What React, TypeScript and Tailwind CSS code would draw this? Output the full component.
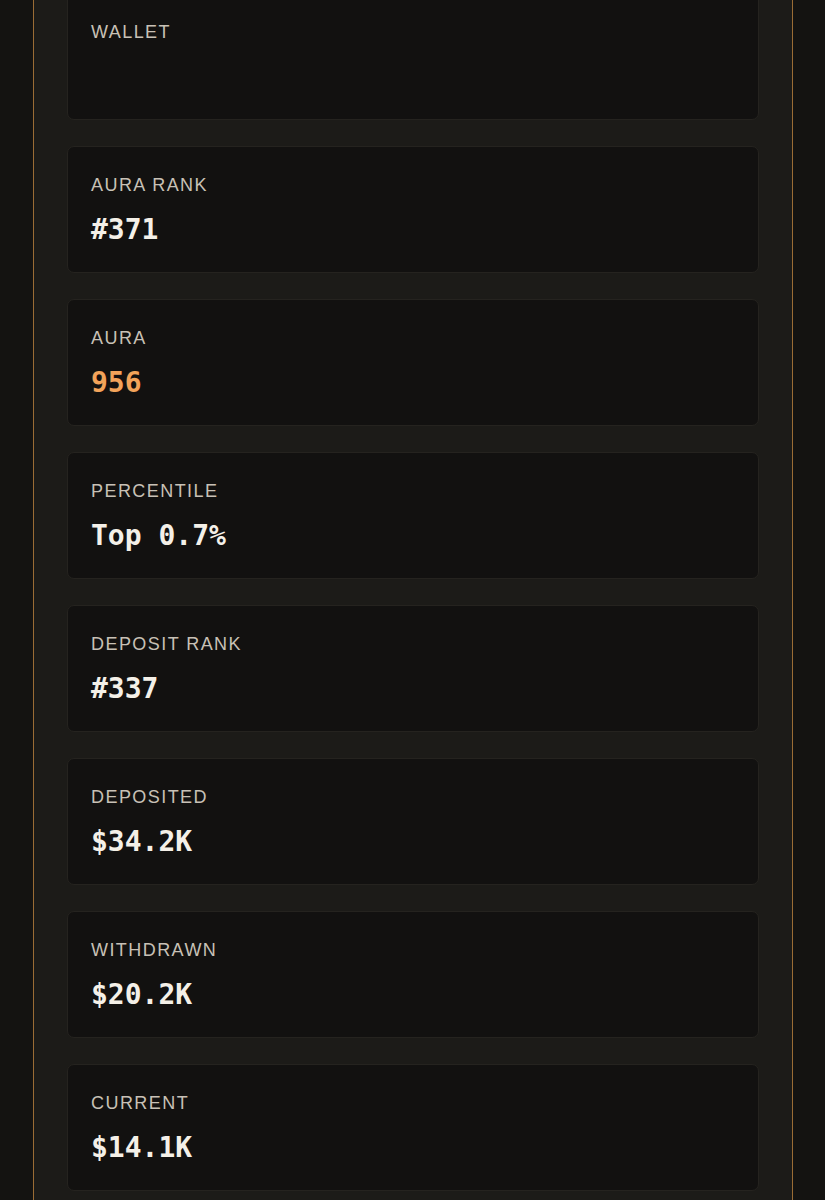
export default function App() {
  const stats = [
    { label: 'Wallet', value: '' },
    { label: 'Aura Rank', value: '#371' },
    { label: 'Aura', value: '956', accent: true },
    { label: 'Percentile', value: 'Top 0.7%' },
    { label: 'Deposit Rank', value: '#337' },
    { label: 'Deposited', value: '$34.2K' },
    { label: 'Withdrawn', value: '$20.2K' },
    { label: 'Current', value: '$14.1K' },
  ]

  return (
    <div className="h-[1200px] w-full overflow-hidden bg-[#141311] pl-[33px]">
      <div className="h-[1240px] w-[760px] border-x border-[#9a6c35] bg-[#1c1b18] px-[33px]">
        <div className="-mt-[7px] flex flex-col gap-[26px]">
          {stats.map((s) => (
            <div
              key={s.label}
              className="h-[127px] shrink-0 rounded-[7px] border border-[#25231f] bg-[#121110] px-[23px] pt-[26px]"
            >
              <p
                className="text-[18px] leading-6 uppercase tracking-[0.08em] text-[#c8c1b6]"
                style={{ fontFamily: '"Liberation Sans", Arial, sans-serif' }}
              >
                {s.label}
              </p>
              {s.value && (
                <p
                  className={`mt-[15px] text-[28px] leading-9 font-bold ${
                    s.accent ? 'text-[#f2a35a]' : 'text-[#f4f0e8]'
                  }`}
                  style={{ fontFamily: '"DejaVu Sans Mono", "Liberation Mono", monospace' }}
                >
                  {s.value}
                </p>
              )}
            </div>
          ))}
        </div>
      </div>
    </div>
  )
}
